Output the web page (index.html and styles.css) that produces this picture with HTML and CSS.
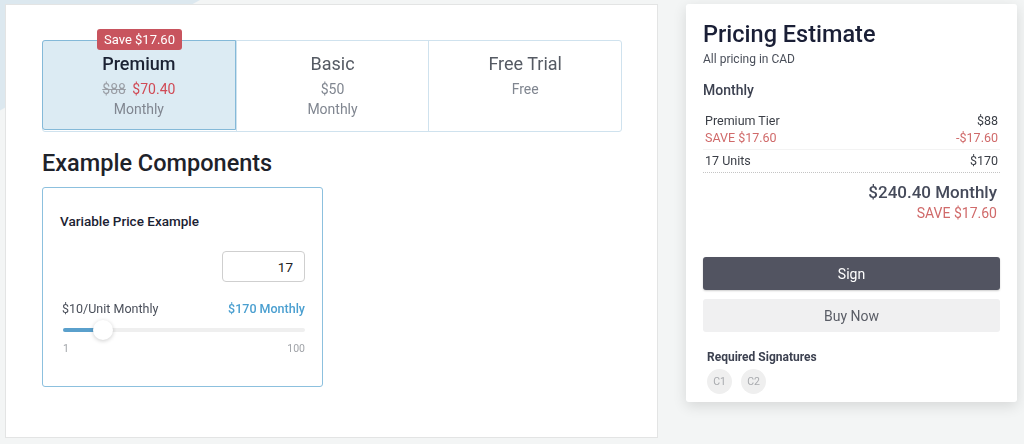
FILE: index.html
```html
<!DOCTYPE html>
<html lang="en">
<head>
    <meta charset="UTF-8">
    <meta name="viewport" content="width=device-width, initial-scale=1.0">
    <title>Pricing</title>
    <link rel="stylesheet" href="styles.css">
</head>
<body>
<div class="backdrop"></div>
<div id="page">
    <div class="main">
        <div class="tiers">
            <div class="tier selected">
                <span class="badge">Save $17.60</span>
                <div class="tier-name">Premium</div>
                <div class="tier-price"><s>$88</s> <span class="discount">$70.40</span></div>
                <div class="tier-period">Monthly</div>
            </div>
            <div class="tier">
                <div class="tier-name">Basic</div>
                <div class="tier-price">$50</div>
                <div class="tier-period">Monthly</div>
            </div>
            <div class="tier">
                <div class="tier-name">Free Trial</div>
                <div class="tier-price">Free</div>
            </div>
        </div>

        <h2>Example Components</h2>

        <div class="component">
            <div class="component-title">Variable Price Example</div>
            <div class="qty-row">
                <input type="text" class="qty" value="17">
            </div>
            <div class="price-row">
                <span>$10/Unit Monthly</span>
                <span class="price-total">$170 Monthly</span>
            </div>
            <div class="slider">
                <div class="track"><div class="fill"></div></div>
                <div class="thumb"></div>
            </div>
            <div class="range-labels">
                <span>1</span>
                <span>100</span>
            </div>
        </div>
    </div>

    <div class="estimate">
        <h1>Pricing Estimate</h1>
        <div class="currency">All pricing in CAD</div>
        <div class="period">Monthly</div>

        <div class="lines">
            <div class="line"><span>Premium Tier</span><span>$88</span></div>
            <div class="line save"><span>SAVE $17.60</span><span>-$17.60</span></div>
        </div>
        <div class="lines">
            <div class="line"><span>17 Units</span><span>$170</span></div>
        </div>

        <div class="total">$240.40 Monthly</div>
        <div class="total-save">SAVE $17.60</div>

        <button class="btn sign">Sign</button>
        <button class="btn buy">Buy Now</button>

        <div class="sig-title">Required Signatures</div>
        <div class="sigs">
            <span class="sig">C1</span>
            <span class="sig">C2</span>
        </div>
    </div>
</div>
</body>
</html>
```

FILE: styles.css
```css
body {
    margin: 0;
    background-color: #f3f5f5;
    font-family: Roboto, "Noto Sans", sans-serif;
    color: #3c4150;
}
.backdrop {
    position: fixed;
    top: 0;
    left: 0;
    width: 200px;
    height: 120px;
    background-color: #dce8ef;
    clip-path: polygon(0 0, 100% 0, 0 92%);
}
#page {
    position: relative;
    display: flex;
    align-items: flex-start;
    gap: 28px;
    padding: 4px 7px 0 5px;
}
.main {
    width: 653px;
    height: 434px;
    box-sizing: border-box;
    background-color: #fff;
    border: 1px solid #e3e4e4;
    padding: 35px 0 0 36px;
}
.tiers {
    display: flex;
    width: 580px;
    border: 1px solid #cfe2ee;
    border-radius: 3px;
    box-sizing: border-box;
}
.tier {
    position: relative;
    flex: 1;
    text-align: center;
    padding: 11px 0;
    height: 90px;
    box-sizing: border-box;
    border-left: 1px solid #cfe2ee;
    color: #555a63;
}
.tier:first-child {
    border-left: none;
}
.tier.selected {
    background-color: #dcebf3;
    margin: -1px 0 -1px -1px;
    border: 1px solid #84b9d8;
    border-radius: 3px 0 0 3px;
    padding-top: 11px;
}
.badge {
    position: absolute;
    top: -12px;
    left: 54px;
    background-color: #c8545e;
    color: #fff;
    font-size: 13px;
    line-height: 21px;
    padding: 0 7px;
    border-radius: 3px;
}
.tier-name {
    font-size: 18px;
    line-height: 24px;
    margin-bottom: 3px;
}
.selected .tier-name {
    font-weight: 500;
    color: #1b2233;
}
.tier-price {
    font-size: 14px;
    line-height: 20px;
    color: #808690;
}
.tier-price s {
    color: #9a9ea5;
    margin-right: 3px;
}
.discount {
    color: #d04a55;
}
.tier-period {
    font-size: 14px;
    line-height: 20px;
    color: #808690;
}
h2 {
    font-size: 23.5px;
    font-weight: 500;
    line-height: 28px;
    color: #1e222a;
    margin: 17px 0 10px;
}
.component {
    width: 281px;
    height: 200px;
    border: 1px solid #8cc0de;
    border-radius: 3px;
    box-sizing: border-box;
    padding: 23px 17px 0 17px;
}
.component-title {
    font-size: 13.5px;
    font-weight: 500;
    line-height: 20px;
    color: #1b2233;
}
.qty-row {
    display: flex;
    justify-content: flex-end;
    margin-top: 20px;
}
.qty {
    width: 83px;
    height: 31px;
    box-sizing: border-box;
    border: 1px solid #cfcfcf;
    border-radius: 4px;
    text-align: right;
    padding: 0 11px;
    font-family: Roboto, sans-serif;
    font-size: 13.5px;
    color: #222;
}
.price-row {
    display: flex;
    justify-content: space-between;
    margin-top: 18px;
    padding-left: 2px;
    font-size: 12.5px;
    line-height: 18px;
    color: #4a4f5a;
}
.price-total {
    color: #4a9fd0;
    font-weight: 500;
}
.slider {
    position: relative;
    height: 20px;
    margin: 2px 0 0 3px;
}
.track {
    position: absolute;
    top: 8px;
    left: 0;
    right: 0;
    height: 4px;
    border-radius: 2px;
    background-color: #efefef;
}
.fill {
    width: 32px;
    height: 100%;
    border-radius: 2px;
    background-color: #5aa0cc;
}
.thumb {
    position: absolute;
    top: 0;
    left: 30px;
    width: 20px;
    height: 20px;
    border-radius: 50%;
    background-color: #fff;
    box-shadow: 0 1px 4px rgba(0, 0, 0, 0.2);
}
.range-labels {
    display: flex;
    justify-content: space-between;
    margin: 2px 0 0 3px;
    font-size: 10.5px;
    line-height: 14px;
    color: #a0a3a8;
}
.estimate {
    width: 331px;
    height: 398px;
    box-sizing: border-box;
    background-color: #fff;
    border-radius: 3px;
    box-shadow: 0 4px 14px rgba(0, 0, 0, 0.12);
    padding: 15px 17px 0 17px;
}
h1 {
    margin: 0;
    font-size: 23.5px;
    font-weight: 500;
    line-height: 30px;
    color: #1a1f36;
}
.currency {
    margin-top: 2px;
    font-size: 12px;
    line-height: 16px;
    color: #4a4f5a;
}
.period {
    margin-top: 13px;
    font-size: 14px;
    font-weight: 500;
    line-height: 20px;
    color: #3c4150;
}
.lines {
    margin-top: 12px;
    padding: 0 2px;
}
.lines + .lines {
    margin-top: 3px;
    padding-top: 2px;
    border-top: 1px solid #f3f3f3;
    border-bottom: 1px dotted #c4c4c4;
    padding-bottom: 3px;
}
.line {
    display: flex;
    justify-content: space-between;
    font-size: 12.5px;
    line-height: 17px;
    color: #3a3e46;
}
.line.save {
    color: #d06a6a;
}
.total {
    margin-top: 8px;
    text-align: right;
    font-size: 17px;
    font-weight: 500;
    line-height: 22px;
    color: #454a5a;
    padding-right: 3px;
}
.total-save {
    text-align: right;
    font-size: 14px;
    line-height: 20px;
    color: #d06a6a;
    padding-right: 3px;
}
.btn {
    display: block;
    width: 297px;
    height: 33px;
    border: none;
    border-radius: 3px;
    font-family: Roboto, sans-serif;
    font-size: 14px;
    cursor: pointer;
}
.sign {
    margin-top: 34px;
    background-color: #525461;
    color: #fff;
    box-shadow: 0 1px 2px rgba(0, 0, 0, 0.2);
}
.buy {
    margin-top: 9px;
    background-color: #f0f0f1;
    color: #5a5d66;
}
.sig-title {
    margin: 17px 0 0 4px;
    font-size: 12px;
    font-weight: 700;
    line-height: 16px;
    color: #3c4150;
}
.sigs {
    display: flex;
    gap: 9px;
    margin: 4px 0 0 4px;
}
.sig {
    width: 25px;
    height: 25px;
    border-radius: 50%;
    background-color: #efefef;
    color: #a8aaae;
    font-size: 10.5px;
    display: flex;
    align-items: center;
    justify-content: center;
}
```
